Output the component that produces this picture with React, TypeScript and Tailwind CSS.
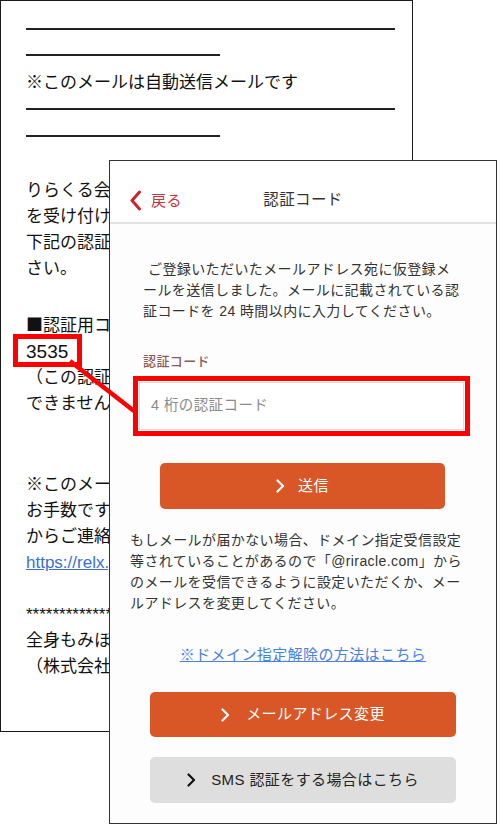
import React from "react";

const Chevron = ({ color }: { color: string }) => (
  <svg width="9" height="14" viewBox="0 0 9 14" className="shrink-0">
    <polyline points="1.5,1.5 7,7 1.5,12.5" fill="none" stroke={color} strokeWidth="2.2" strokeLinecap="round" strokeLinejoin="round" />
  </svg>
);

export default function App() {
  const font = "font-['Liberation_Sans','Noto_Sans_CJK_JP',sans-serif]";
  return (
    <div className={`relative w-[500px] h-[825px] bg-white overflow-hidden ${font}`}>
      {/* Email behind */}
      <div className="absolute left-0 top-0 w-[413px] h-[732px] border border-[#1a1a1a] bg-white overflow-hidden">
        <div className="flex flex-col pl-[25px] pt-[27px] text-[17px] text-[#111] whitespace-nowrap">
          <div className="h-[2px] w-[369px] bg-[#222]" />
          <div className="h-[2px] w-[194px] bg-[#222] mt-[24px]" />
          <div className="leading-[26px] mt-[14px]">※このメールは自動送信メールです</div>
          <div className="h-[2px] w-[369px] bg-[#222] mt-[12px]" />
          <div className="h-[2px] w-[194px] bg-[#222] mt-[25px]" />
          <div className="leading-[26px] mt-[41px] w-[83px] overflow-hidden">
            <div>りらくる会員登録のお申し込み</div>
            <div>を受け付けました。</div>
            <div>下記の認証コードを入力してくだ</div>
            <div>さい。</div>
          </div>
          <div className="leading-[26px] mt-[29px]">
            <div className="w-[83px] overflow-hidden">
              <span className="font-['Noto_Sans_CJK_JP',sans-serif]">■</span>認証用コード
            </div>
            <div className="relative text-[19px]">
              3535
              <div className="absolute left-[-13px] top-[-5px] w-[69px] h-[33px] border-[5px] border-[#ff0000]" />
            </div>
            <div className="w-[83px] overflow-hidden">
              <div>（この認証コードは24時間のみ有効</div>
              <div>できません）</div>
            </div>
          </div>
          <div className="leading-[26px] mt-[55px] w-[83px] overflow-hidden">
            <div>※このメールは送信専用です。</div>
            <div>お手数ですがお問い合わせは下記</div>
            <div>からご連絡ください。</div>
            <div className="text-[#3b6fd6] underline">https://relx.jp/contact</div>
            <div>&nbsp;</div>
            <div>****************************</div>
            <div>全身もみほぐし・リラクゼーション</div>
            <div>（株式会社りらくる）</div>
          </div>
        </div>
      </div>

      {/* Phone screen */}
      <div className="absolute left-[109px] top-[160px] w-[388px] h-[664px] border border-[#333] bg-[#fdfdfd] flex flex-col tracking-[0.4px]">
        <div className="relative h-[63px] pt-[16px] flex items-center justify-center border-b-2 border-[#e2e2e2] bg-white">
          <div className="absolute left-[19px] top-[29px] flex items-center gap-[9px]">
            <svg width="13" height="21" viewBox="0 0 13 21">
              <polyline points="10.5,2 3,10.5 10.5,19" fill="none" stroke="#c8262d" strokeWidth="3" strokeLinecap="round" strokeLinejoin="round" />
            </svg>
            <span className="text-[15px] text-[#c8353a] leading-[20px]">戻る</span>
          </div>
          <span className="text-[15.5px] text-[#333] leading-[20px]">認証コード</span>
        </div>

        <div className="flex flex-col">
          <p className="pl-[33px] pt-[35px] text-[14px] leading-[21px] text-[#333] whitespace-nowrap">
            <span className="pl-[5px]">ご登録いただいたメールアドレス宛に仮登録メ</span>
            <br />
            ールを送信しました。メールに記載されている認
            <br />
            証コードを 24 時間以内に入力してください。
          </p>
          <div className="pl-[33px] mt-[31px] text-[13px] leading-[18px] text-[#8c5a5a] font-medium">認証コード</div>
          <div className="ml-[23px] mt-[5px] w-[337px] h-[60px] border-[5px] border-[#ff0000] p-[1px]">
            <div className="h-full w-full bg-white border border-[#dcdcdc] flex items-center pl-[11px] text-[14.5px] text-[#8a8a8a]">
              4 桁の認証コード
            </div>
          </div>
          <div className="ml-[50px] mt-[27px] w-[285px] h-[46px] rounded-[5px] bg-[#d95627] flex items-center justify-center gap-[13px] text-white text-[15px]">
            <Chevron color="#ffffff" />
            <span>送信</span>
          </div>
          <p className="pl-[20px] mt-[21px] text-[14px] leading-[21px] text-[#333] whitespace-nowrap">
            もしメールが届かない場合、ドメイン指定受信設定
            <br />
            等されていることがあるので「@riracle.com」から
            <br />
            のメールを受信できるように設定いただくか、メー
            <br />
            ルアドレスを変更してください。
          </p>
          <div className="mt-[31px] text-center text-[15px] leading-[20px] text-[#4a80e4] underline">
            ※ドメイン指定解除の方法はこちら
          </div>
          <div className="ml-[40px] mt-[27px] w-[306px] h-[45px] rounded-[5px] bg-[#d95627] flex items-center justify-center gap-[16px] text-white text-[15px]">
            <Chevron color="#ffffff" />
            <span>メールアドレス変更</span>
          </div>
          <div className="ml-[40px] mt-[20px] w-[306px] h-[46px] rounded-[5px] bg-[#dedede] flex items-center justify-center gap-[15px] text-[#222] text-[15px]">
            <Chevron color="#111111" />
            <span>SMS 認証をする場合はこちら</span>
          </div>
        </div>
      </div>

      {/* Connector line */}
      <svg className="absolute left-0 top-0 pointer-events-none" width="500" height="825">
        <line x1="70" y1="361" x2="134" y2="411" stroke="#ff0000" strokeWidth="4.5" />
      </svg>
    </div>
  );
}
